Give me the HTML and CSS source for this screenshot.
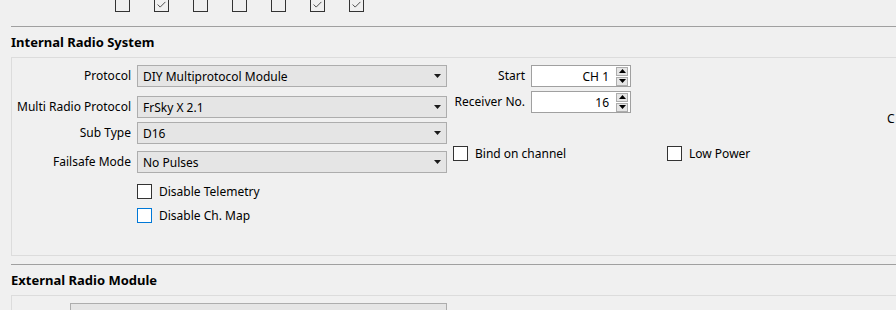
FILE: index.html
```html
<!DOCTYPE html>
<html lang="en">

<head>
    <meta charset="UTF-8">
    <meta name="viewport" content="width=device-width, initial-scale=1.0">
    <title>Radio Setup</title>
    <link rel="stylesheet" href="styles.css">
</head>

<body>
    <div class="top-checks">
        <span class="check"></span>
        <span class="check checked"><svg viewBox="0 0 15 15"><path d="M3 7.5 L6 10.5 L12 4.5"/></svg></span>
        <span class="check"></span>
        <span class="check"></span>
        <span class="check"></span>
        <span class="check checked"><svg viewBox="0 0 15 15"><path d="M3 7.5 L6 10.5 L12 4.5"/></svg></span>
        <span class="check checked"><svg viewBox="0 0 15 15"><path d="M3 7.5 L6 10.5 L12 4.5"/></svg></span>
    </div>

    <hr class="section-sep">
    <h2 class="section-title">Internal Radio System</h2>

    <div class="group">
        <div class="form-left">
            <span class="field-label">Protocol</span>
            <div class="combo"><span>DIY Multiprotocol Module</span><svg class="combo-arrow" viewBox="0 0 7 4"><path d="M0 0 H7 L3.5 4 Z"/></svg></div>

            <span class="field-label">Multi Radio Protocol</span>
            <div class="combo"><span>FrSky X 2.1</span><svg class="combo-arrow" viewBox="0 0 7 4"><path d="M0 0 H7 L3.5 4 Z"/></svg></div>

            <span class="field-label">Sub Type</span>
            <div class="combo"><span>D16</span><svg class="combo-arrow" viewBox="0 0 7 4"><path d="M0 0 H7 L3.5 4 Z"/></svg></div>

            <span class="field-label">Failsafe Mode</span>
            <div class="combo"><span>No Pulses</span><svg class="combo-arrow" viewBox="0 0 7 4"><path d="M0 0 H7 L3.5 4 Z"/></svg></div>

            <span></span>
            <label class="check-line"><span class="check"></span>Disable Telemetry</label>

            <span></span>
            <label class="check-line"><span class="check focus"></span>Disable Ch. Map</label>
        </div>

        <div class="form-right">
            <span class="field-label">Start</span>
            <div class="spin">
                <span class="spin-value">CH 1</span>
                <span class="spin-buttons">
                    <span class="spin-btn"><svg viewBox="0 0 7 4"><path d="M0 4 H7 L3.5 0 Z"/></svg></span>
                    <span class="spin-btn"><svg viewBox="0 0 7 4"><path d="M0 0 H7 L3.5 4 Z"/></svg></span>
                </span>
            </div>

            <span class="field-label">Receiver No.</span>
            <div class="spin">
                <span class="spin-value">16</span>
                <span class="spin-buttons">
                    <span class="spin-btn"><svg viewBox="0 0 7 4"><path d="M0 4 H7 L3.5 0 Z"/></svg></span>
                    <span class="spin-btn"><svg viewBox="0 0 7 4"><path d="M0 0 H7 L3.5 4 Z"/></svg></span>
                </span>
            </div>

            <div class="option-line">
                <label class="check-line"><span class="check"></span>Bind on channel</label>
                <label class="check-line"><span class="check"></span>Low Power</label>
            </div>
        </div>

        <div class="cut-col">
            <span class="field-label">C</span>
        </div>
    </div>

    <hr class="section-sep">
    <h2 class="section-title">External Radio Module</h2>

    <div class="group group-next">
        <div class="form-next">
            <span></span>
            <div class="combo"></div>
        </div>
    </div>
</body>

</html>
```

FILE: styles.css
```css
body {
    margin: 0;
    background: #f0f0f0;
    font-family: "Noto Sans", "Open Sans", sans-serif;
    font-size: 12px;
    color: #000;
    overflow: hidden;
}

/* case a cocher facon Windows */
.check {
    display: inline-block;
    box-sizing: border-box;
    width: 15px;
    height: 15px;
    border: 1px solid #333;
    background: #fff;
    flex: none;
}

.check svg {
    display: block;
    width: 13px;
    height: 13px;
    fill: none;
    stroke: #333;
    stroke-width: 1;
}

.check.focus {
    border-color: #0078d7;
}

.top-checks {
    display: flex;
    gap: 24px;
    margin-top: -3px;
    padding-left: 115px;
    height: 15px;
}

.top-checks .check {
    background: transparent;
}

.section-sep {
    margin: 14px 0 0 11px;
    border: none;
    border-top: 1px solid #a0a0a0;
    height: 0;
}

.group + .section-sep {
    margin-top: 8px;
}

.section-title {
    margin: 7px 0 0 11px;
    font-size: 13px;
    font-weight: bold;
    line-height: 16px;
    height: 16px;
}

.group {
    display: flex;
    box-sizing: border-box;
    margin: 7px -10px 0 11px;
    height: 199px;
    border: 1px solid #dcdcdc;
    padding-top: 7px;
}

.field-label {
    text-align: right;
    white-space: nowrap;
    line-height: 22px;
}

.form-left {
    display: grid;
    grid-template-columns: 119px 310px;
    grid-template-rows: 31px 26px 29px 32px 24px 24px;
    column-gap: 6px;
    align-items: start;
}

.combo {
    box-sizing: border-box;
    display: flex;
    align-items: center;
    justify-content: space-between;
    height: 22px;
    padding: 0 5px 0 5px;
    background: #e5e5e5;
    border: 1px solid #adadad;
}

.combo-arrow {
    width: 7px;
    height: 4px;
    fill: #1a1a1a;
}

.check-line {
    display: flex;
    align-items: center;
    gap: 7px;
    height: 16px;
    white-space: nowrap;
}

.form-right {
    display: grid;
    grid-template-columns: 72px 100px;
    grid-template-rows: 26px 54px 20px;
    column-gap: 6px;
    align-items: start;
    width: 300px;
    margin-left: 6px;
}

.spin {
    box-sizing: border-box;
    display: flex;
    align-items: center;
    height: 22px;
    background: #fff;
    border: 1px solid #a0a0a0;
    padding-right: 2px;
}

.spin-value {
    flex: 1;
    text-align: right;
    padding-right: 7px;
}

.spin-buttons {
    display: flex;
    flex-direction: column;
    gap: 1px;
}

.spin-btn {
    box-sizing: border-box;
    display: flex;
    align-items: center;
    justify-content: center;
    width: 12px;
    height: 9px;
    background: #e5e5e5;
    border: 1px solid #adadad;
}

.spin-btn svg {
    width: 7px;
    height: 4px;
    fill: #000;
}

.option-line {
    grid-column: 1 / 3;
    display: grid;
    grid-template-columns: 214px auto;
}

.cut-col {
    padding-top: 43px;
    margin-left: 134px;
}

.group-next {
    height: 40px;
    padding-top: 7px;
}

.form-next {
    display: grid;
    grid-template-columns: 52px 377px;
    column-gap: 6px;
}
```
